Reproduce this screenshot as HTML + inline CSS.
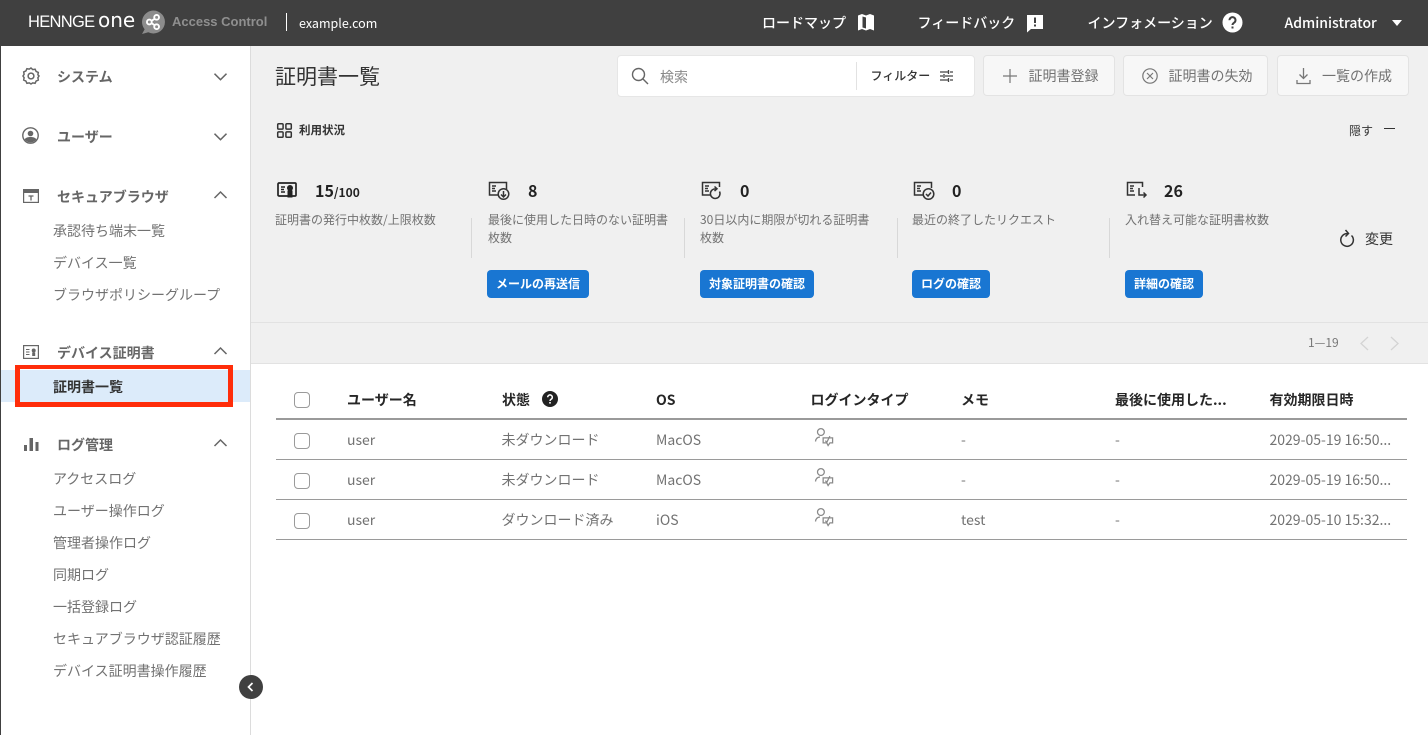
<!DOCTYPE html>
<html lang="ja"><head><meta charset="utf-8"><title>証明書一覧</title>
<style>
*{box-sizing:border-box}
html,body{margin:0;padding:0;width:1428px;height:735px;overflow:hidden;background:#fff}
body{font-family:"Liberation Sans","Noto Sans CJK JP",sans-serif;position:relative}
.t{position:absolute;white-space:nowrap;font-family:"Noto Sans CJK JP","Liberation Sans",sans-serif;line-height:20px;height:20px}
.a{position:absolute}
svg{position:absolute;overflow:visible}
.g{font-size:14px;font-weight:700;color:#666}
.s{font-size:14px;color:#727272}
.w{color:#fff;font-size:14px;font-weight:500}
.btn{position:absolute;top:55px;height:41px;background:#f7f7f7;border:1px solid #e3e3e3;border-radius:4px}
.bt{font-size:14px;color:#727272}
.d{font-size:12px;color:#727272;line-height:18px;height:auto;white-space:normal}
.n{font-size:16px;font-weight:700;color:#222}
.cta{position:absolute;top:270px;height:28px;background:#1976d2;border-radius:4px;color:#fff;font-size:12px;font-weight:700;line-height:28px;text-align:center;font-family:"Noto Sans CJK JP",sans-serif}
.sep{position:absolute;top:218px;width:1px;height:40px;background:#d8d8d8}
.th{font-size:14px;font-weight:700;color:#262626}
.td{font-size:14px;color:#727272}
.cb{position:absolute;left:294px;width:16px;height:16px;border:1px solid #9a9a9a;border-radius:4px;background:#fff}
.ln{position:absolute;left:276px;width:1131px;height:1px;background:#9a9a9a}
</style></head><body>

<div class="a" style="left:0;top:0;width:1428px;height:46px;background:#404040"></div>
<div class="a" style="left:0;top:46px;width:1px;height:689px;background:#404040"></div>
<div class="a" style="left:251px;top:46px;width:1177px;height:277px;background:#f0f0f0"></div>
<div class="a" style="left:251px;top:322px;width:1177px;height:1px;background:#e2e2e2"></div>
<div class="a" style="left:251px;top:323px;width:1177px;height:40px;background:#f0f0f0"></div>
<div class="a" style="left:251px;top:363px;width:1177px;height:1px;background:#e2e2e2"></div>
<div class="a" style="left:250px;top:46px;width:1px;height:689px;background:#dcdcdc"></div>

<!-- Header -->
<div class="t" style="left:28px;top:12px;color:#fff;font-family:'Liberation Sans',sans-serif;font-size:16.5px;letter-spacing:-.7px">HENNGE</div>
<div class="t" style="left:98px;top:10px;color:#fff;font-family:'DejaVu Sans',sans-serif;font-size:20px">one</div>
<svg style="left:141px;top:10px" width="25" height="24" viewBox="0 0 24 23"><path d="M12 0.500a11 11 0 1 1-5 20.800L1 23l2.500-4.500A11 11 0 0 1 12 .5z" fill="#8c8c8c"/><g fill="none" stroke="#fff" stroke-width="1.800"><circle cx="8" cy="11.500" r="2.300"/><circle cx="15" cy="7" r="2.300"/><circle cx="15" cy="16" r="2.300"/><path d="M10 10.500l3-2M10 12.500l3 2"/></g></svg>
<div class="t" style="left:172px;top:12px;color:#8f8f8f;font-family:'Liberation Sans',sans-serif;font-size:13px;font-weight:700">Access Control</div>
<div class="a" style="left:286px;top:13px;width:1px;height:18px;background:#fff"></div>
<div class="t" style="left:299px;top:13px;color:#fff;font-size:12.500px">example.com</div>

<div class="t w" style="left:762px;top:13px">ロードマップ</div>
<svg style="left:857px;top:13px" width="19" height="19" viewBox="0 0 19 19"><path d="M1 2.500l4-1.500 4 1.500 4-1.500 4 1.500v15l-4-1.500-4 1.500-4-1.500-4 1.500z" fill="#fff"/><path d="M5.500 3.500l3.500 1v11l-3.500-1z" fill="#404040"/></svg>
<div class="t w" style="left:917.500px;top:13px">フィードバック</div>
<svg style="left:1026px;top:14px" width="19" height="19" viewBox="0 0 19 19"><path d="M1 1h16v14H5l-4 3.500z" fill="#fff"/><rect x="8" y="3.500" width="2" height="5.500" fill="#404040"/><rect x="8" y="10.500" width="2" height="2" fill="#404040"/></svg>
<div class="t w" style="left:1087.500px;top:13px">インフォメーション</div>
<svg style="left:1222px;top:12px" width="21" height="21" viewBox="0 0 21 21"><circle cx="10.500" cy="10.500" r="10" fill="#fff"/><path d="M7.500 8.200a3 3 0 1 1 4.600 2.500c-1.100.7-1.600 1.200-1.600 2.300" fill="none" stroke="#404040" stroke-width="2"/><rect x="9.500" y="14.500" width="2" height="2" fill="#404040"/></svg>
<div class="t w" style="left:1284.500px;top:13px">Administrator</div>
<svg style="left:1392px;top:20px" width="10" height="6"><path d="M0 0h10L5 6z" fill="#fff"/></svg>

<!-- Sidebar -->
<svg style="left:22px;top:67px" width="18" height="18" viewBox="0 0 18 18" fill="none" stroke="#666" stroke-width="1.500"><path d="M9 1l1.700 1.600 2.400-.4 1 2.200 2.200 1-.4 2.400L17 9l-1.100 1.700.4 2.400-2.200 1-1 2.200-2.400-.4L9 17l-1.700-1.100-2.400.4-1-2.200-2.200-1 .4-2.400L1 9l1.100-1.700-.4-2.400 2.200-1 1-2.200 2.400.4z"/><circle cx="9" cy="9" r="2.900"/></svg>
<div class="t g" style="left:57px;top:67px">システム</div>
<svg style="left:213.500px;top:73px" width="13" height="8" fill="none" stroke="#666" stroke-width="1.500"><path d="M.5.700L6.500 6.700 12.500.7"/></svg>

<svg style="left:22px;top:127px" width="17" height="17" viewBox="0 0 17 17"><circle cx="8.500" cy="8.500" r="7.700" fill="none" stroke="#666" stroke-width="1.400"/><circle cx="8.500" cy="6.500" r="2.800" fill="#666"/><path d="M2.500 12.500c1.200-2 3.500-2.500 6-2.500s4.800.5 6 2.500a7.700 7.700 0 0 1-12 0z" fill="#666"/></svg>
<div class="t g" style="left:57px;top:127px">ユーザー</div>
<svg style="left:213.500px;top:133px" width="13" height="8" fill="none" stroke="#666" stroke-width="1.500"><path d="M.5.700L6.500 6.700 12.500.7"/></svg>

<svg style="left:23px;top:189px" width="16" height="14" viewBox="0 0 16 14"><rect x=".6" y=".6" width="14.800" height="12.800" fill="none" stroke="#666" stroke-width="1.200"/><rect x=".6" y=".6" width="14.800" height="3.400" fill="#666"/><path d="M5.500 7h5M8 7v4.500" stroke="#666" stroke-width="1.300" fill="none"/></svg>
<div class="t g" style="left:57px;top:187px">セキュアブラウザ</div>
<svg style="left:213.500px;top:191px" width="13" height="8" fill="none" stroke="#666" stroke-width="1.500"><path d="M.5 7L6.500 1 12.500 7"/></svg>
<div class="t s" style="left:53px;top:221px">承認待ち端末一覧</div>
<div class="t s" style="left:53px;top:253px">デバイス一覧</div>
<div class="t s" style="left:53px;top:285px">ブラウザポリシーグループ</div>

<svg style="left:23px;top:345px" width="16" height="14" viewBox="0 0 16 14"><rect x=".6" y=".6" width="14.800" height="12.800" fill="none" stroke="#666" stroke-width="1.200"/><path d="M3 4.500h3.500M3 7h3.500M3 9.500h3.500" stroke="#666" stroke-width="1.100"/><circle cx="10.700" cy="5.500" r="2" fill="#666"/><rect x="9.200" y="7.500" width="3" height="3.500" fill="#666"/></svg>
<div class="t g" style="left:57px;top:343px">デバイス証明書</div>
<svg style="left:213.500px;top:347px" width="13" height="8" fill="none" stroke="#666" stroke-width="1.500"><path d="M.5 7L6.500 1 12.500 7"/></svg>

<div class="a" style="left:1px;top:370px;width:249px;height:32px;background:#dcebfa"></div>
<div class="a" style="left:15px;top:365px;width:218px;height:42px;border:solid #ff2d0a;border-width:4px 5px 5px 5px"></div>
<div class="t" style="left:53px;top:377px;font-size:14px;font-weight:700;color:#333">証明書一覧</div>

<svg style="left:24px;top:438px" width="15" height="14"><rect x="0" y="7" width="3" height="6" fill="#666"/><rect x="5.500" y="0" width="3.500" height="13" fill="#666"/><rect x="11.500" y="4" width="3" height="9" fill="#666"/></svg>
<div class="t g" style="left:57px;top:435px">ログ管理</div>
<svg style="left:213.500px;top:439px" width="13" height="8" fill="none" stroke="#666" stroke-width="1.500"><path d="M.5 7L6.500 1 12.500 7"/></svg>
<div class="t s" style="left:53px;top:469px">アクセスログ</div>
<div class="t s" style="left:53px;top:501px">ユーザー操作ログ</div>
<div class="t s" style="left:53px;top:533px">管理者操作ログ</div>
<div class="t s" style="left:53px;top:565px">同期ログ</div>
<div class="t s" style="left:53px;top:597px">一括登録ログ</div>
<div class="t s" style="left:53px;top:629px">セキュアブラウザ認証履歴</div>
<div class="t s" style="left:53px;top:661px">デバイス証明書操作履歴</div>
<div class="a" style="left:239px;top:675px;width:24px;height:24px;border-radius:50%;background:#404040"></div>
<svg style="left:247px;top:682px" width="8" height="10" fill="none" stroke="#fff" stroke-width="1.700"><path d="M5.500 1L1.500 5 5.500 9"/></svg>

<!-- Title & actions -->
<div class="t" style="left:275px;top:65px;font-size:21px;color:#333;line-height:22px;height:22px">証明書一覧</div>

<div class="a" style="left:617px;top:55px;width:358px;height:42px;background:#fff;border:1px solid #e6e6e6;border-radius:4px"></div>
<svg style="left:631px;top:67px" width="18" height="18" fill="none" stroke="#666" stroke-width="1.400"><circle cx="7.500" cy="7.500" r="6"/><path d="M12 12l5 5"/></svg>
<div class="t" style="left:660px;top:67px;font-size:14px;color:#888">検索</div>
<div class="a" style="left:856px;top:62px;width:1px;height:28px;background:#e2e2e2"></div>
<div class="t" style="left:870.500px;top:66px;font-size:12px;font-weight:500;color:#333">フィルター</div>
<svg style="left:940px;top:70px" width="13" height="12" stroke="#444" stroke-width="1.300" fill="none"><path d="M0 2h8M10 2h3M0 6h3M5 6h8M0 10h8M10 10h3M8.500 0v4M4 4v4M8.500 8v4"/></svg>

<div class="btn" style="left:983px;width:132px"></div>
<svg style="left:1003px;top:69px" width="14" height="14" stroke="#777" stroke-width="1.200"><path d="M7 0v14M0 7h14"/></svg>
<div class="t bt" style="left:1028.500px;top:66px">証明書登録</div>
<div class="btn" style="left:1123px;width:145px"></div>
<svg style="left:1142px;top:68px" width="16" height="16" fill="none" stroke="#777" stroke-width="1.200"><circle cx="8" cy="8" r="7.200"/><path d="M5 5l6 6M11 5l-6 6"/></svg>
<div class="t bt" style="left:1168.500px;top:66px">証明書の失効</div>
<div class="btn" style="left:1277px;width:132px"></div>
<svg style="left:1296px;top:68px" width="15" height="17" fill="none" stroke="#777" stroke-width="1.300"><path d="M7.500 0v10M3.500 6.500l4 4 4-4M1 12v3.500h13V12"/></svg>
<div class="t bt" style="left:1322px;top:66px">一覧の作成</div>

<!-- Usage -->
<svg style="left:277px;top:123px" width="15" height="15" fill="none" stroke="#333" stroke-width="1.500"><rect x=".7" y=".7" width="5.400" height="5.400" rx="1"/><rect x="8.900" y=".7" width="5.400" height="5.400" rx="1"/><rect x=".7" y="8.900" width="5.400" height="5.400" rx="1"/><rect x="8.900" y="8.900" width="5.400" height="5.400" rx="1"/></svg>
<div class="t" style="left:299px;top:120px;font-size:11.500px;font-weight:700;color:#333">利用状況</div>
<div class="t" style="left:1349px;top:121px;font-size:12px;color:#333">隠す</div>
<div class="a" style="left:1384px;top:128px;width:11px;height:1px;background:#333"></div>

<!-- Stat 1 -->
<svg style="left:277px;top:182px" width="20" height="16" viewBox="0 0 20 16"><rect x="1" y="1" width="18" height="13" rx="1" fill="none" stroke="#222" stroke-width="1.700"/><path d="M4 5h4M4 7.500h3M4 10h4" stroke="#222" stroke-width="1.500"/><circle cx="13" cy="6" r="3" fill="#222"/><path d="M10.500 8.500h5V15.500h-5z" fill="#222"/></svg>
<div class="t n" style="left:315px;top:180px">15<span style="font-size:12px">/100</span></div>
<div class="t d" style="left:275px;top:211px;width:180px">証明書の発行中枚数/上限枚数</div>
<div class="sep" style="left:471px"></div>

<!-- Stat 2 -->
<svg style="left:488px;top:181px" width="22" height="20" viewBox="0 0 22 20" fill="none" stroke="#333" stroke-width="1.500"><path d="M11 14H1.500V1.500h17V8"/><path d="M4 5h4M4 7.500h3M4 10h4"/><circle cx="15.500" cy="13" r="5.300" fill="#f0f0f0"/><path d="M15.500 10v6M13 13.500l2.500 2.500 2.500-2.500"/></svg>
<div class="t n" style="left:528px;top:180px">8</div>
<div class="t d" style="left:488px;top:211px;width:182px">最後に使用した日時のない証明書枚数</div>
<div class="cta" style="left:487px;width:102px">メールの再送信</div>
<div class="sep" style="left:684px"></div>

<!-- Stat 3 -->
<svg style="left:701px;top:181px" width="22" height="20" viewBox="0 0 22 20" fill="none" stroke="#333" stroke-width="1.500"><path d="M10 14H1.500V1.500h17V6"/><path d="M4 5h4M4 7.500h3M4 10h4"/><path d="M18.500 10.500a4.800 4.800 0 1 1-3.500-2.600"/><path d="M13.500 5.500l2.500 2.300-2.500 2.200"/></svg>
<div class="t n" style="left:740px;top:180px">0</div>
<div class="t d" style="left:700px;top:211px;width:180px">30日以内に期限が切れる証明書枚数</div>
<div class="cta" style="left:700px;width:114px">対象証明書の確認</div>
<div class="sep" style="left:897px"></div>

<!-- Stat 4 -->
<svg style="left:913px;top:181px" width="22" height="20" viewBox="0 0 22 20" fill="none" stroke="#333" stroke-width="1.500"><path d="M10 14H1.500V1.500h17V7"/><path d="M4 5h4M4 7.500h3M4 10h4"/><circle cx="15.500" cy="13" r="5.300" fill="#f0f0f0"/><path d="M13 13l2 2 3-3.500"/></svg>
<div class="t n" style="left:952px;top:180px">0</div>
<div class="t d" style="left:912px;top:211px;width:180px">最近の終了したリクエスト</div>
<div class="cta" style="left:912px;width:78px">ログの確認</div>
<div class="sep" style="left:1109px"></div>

<!-- Stat 5 -->
<svg style="left:1126px;top:181px" width="22" height="20" viewBox="0 0 22 20" fill="none" stroke="#333" stroke-width="1.500"><path d="M9 14H1.500V1.500h15V6"/><path d="M4 5h4M4 7.500h3M4 10h4"/><path d="M13 7v7h7M17.500 11.500l2.500 2.500-2.500 2.500"/></svg>
<div class="t n" style="left:1164px;top:180px">26</div>
<div class="t d" style="left:1125px;top:211px;width:180px">入れ替え可能な証明書枚数</div>
<div class="cta" style="left:1125px;width:78px">詳細の確認</div>

<svg style="left:1340px;top:229px" width="15" height="19" fill="none" stroke="#333" stroke-width="1.500"><path d="M11.500 6.500a6.300 6.300 0 1 1-4-1.800"/><path d="M5.500 1l3 3.500-3 3"/></svg>
<div class="t" style="left:1365px;top:229px;font-size:14px;color:#333">変更</div>

<!-- Pagination -->
<div class="t" style="left:1308px;top:333px;font-size:12px;color:#777">1—19</div>
<svg style="left:1358.500px;top:336px" width="12" height="15" fill="none" stroke="#d4d4d4" stroke-width="1.300"><path d="M9 1L2 7.500 9 14"/></svg>
<svg style="left:1387.500px;top:336px" width="12" height="15" fill="none" stroke="#d4d4d4" stroke-width="1.300"><path d="M3 1l7 6.500L3 14"/></svg>

<!-- Table -->
<div class="cb" style="top:392px"></div>
<div class="t th" style="left:347px;top:390px">ユーザー名</div>
<div class="t th" style="left:502px;top:390px">状態</div>
<svg style="left:542px;top:391px" width="16" height="16" viewBox="0 0 16 16"><circle cx="8" cy="8" r="8" fill="#222"/><path d="M5.700 6.200a2.300 2.300 0 1 1 3.500 2c-.8.500-1.200.9-1.200 1.800" fill="none" stroke="#fff" stroke-width="1.500"/><rect x="7.200" y="11" width="1.600" height="1.600" fill="#fff"/></svg>
<div class="t th" style="left:656px;top:390px">OS</div>
<div class="t th" style="left:810.500px;top:390px">ログインタイプ</div>
<div class="t th" style="left:961px;top:390px">メモ</div>
<div class="t th" style="left:1115px;top:390px">最後に使用した...</div>
<div class="t th" style="left:1269.500px;top:390px">有効期限日時</div>
<div class="ln" style="top:418px;height:2px"></div>

<div class="cb" style="top:433px"></div>
<div class="t td" style="left:347px;top:430px">user</div>
<div class="t td" style="left:501.500px;top:430px">未ダウンロード</div>
<div class="t td" style="left:656px;top:430px">MacOS</div>
<svg style="left:814px;top:428px" width="21" height="18" viewBox="0 0 22 20" fill="none" stroke="#8a8a8a" stroke-width="1.400"><circle cx="7" cy="4.500" r="3.800"/><path d="M1 15c.3-3 2-4.800 5-5"/><path d="M9.500 11h10.500v5.500h-3l-2 3-1.500-3h-4z"/><path d="M12 14l1.500 2 3.500-7"/></svg>
<div class="t td" style="left:961px;top:430px">-</div>
<div class="t td" style="left:1115px;top:430px">-</div>
<div class="t td" style="left:1269.500px;top:430px">2029-05-19 16:50...</div>
<div class="ln" style="top:459px"></div>

<div class="cb" style="top:473px"></div>
<div class="t td" style="left:347px;top:470px">user</div>
<div class="t td" style="left:501.500px;top:470px">未ダウンロード</div>
<div class="t td" style="left:656px;top:470px">MacOS</div>
<svg style="left:814px;top:468px" width="21" height="18" viewBox="0 0 22 20" fill="none" stroke="#8a8a8a" stroke-width="1.400"><circle cx="7" cy="4.500" r="3.800"/><path d="M1 15c.3-3 2-4.800 5-5"/><path d="M9.500 11h10.500v5.500h-3l-2 3-1.500-3h-4z"/><path d="M12 14l1.500 2 3.500-7"/></svg>
<div class="t td" style="left:961px;top:470px">-</div>
<div class="t td" style="left:1115px;top:470px">-</div>
<div class="t td" style="left:1269.500px;top:470px">2029-05-19 16:50...</div>
<div class="ln" style="top:499px"></div>

<div class="cb" style="top:513px"></div>
<div class="t td" style="left:347px;top:510px">user</div>
<div class="t td" style="left:501.500px;top:510px">ダウンロード済み</div>
<div class="t td" style="left:656px;top:510px">iOS</div>
<svg style="left:814px;top:508px" width="21" height="18" viewBox="0 0 22 20" fill="none" stroke="#8a8a8a" stroke-width="1.400"><circle cx="7" cy="4.500" r="3.800"/><path d="M1 15c.3-3 2-4.800 5-5"/><path d="M9.500 11h10.500v5.500h-3l-2 3-1.500-3h-4z"/><path d="M12 14l1.500 2 3.500-7"/></svg>
<div class="t td" style="left:961px;top:510px">test</div>
<div class="t td" style="left:1115px;top:510px">-</div>
<div class="t td" style="left:1269.500px;top:510px">2029-05-10 15:32...</div>
<div class="ln" style="top:539px"></div>

</body></html>
